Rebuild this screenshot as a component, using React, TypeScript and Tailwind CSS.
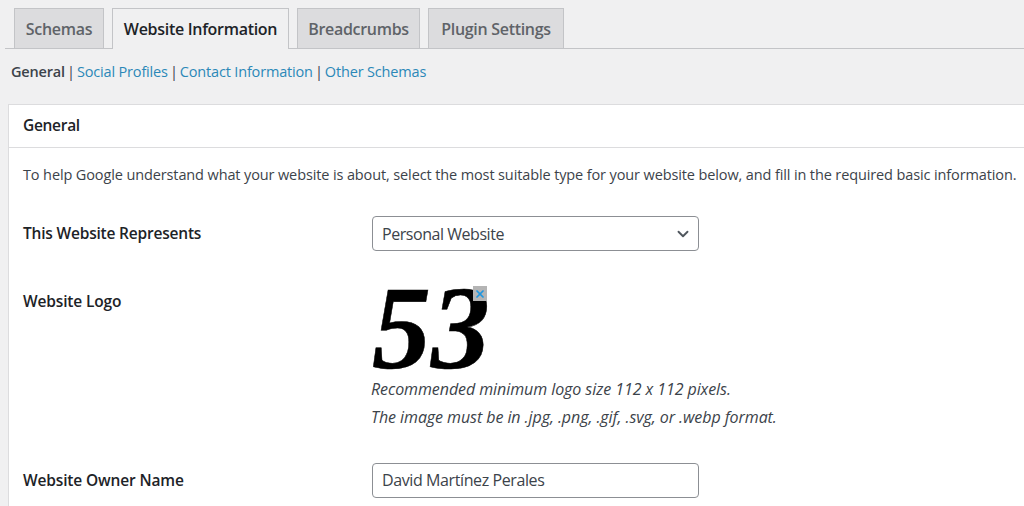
import { ChevronDown, X } from "lucide-react";

const tabs = ["Schemas", "Website Information", "Breadcrumbs", "Plugin Settings"];
const subLinks = ["Social Profiles", "Contact Information", "Other Schemas"];

const App = () => {
  return (
    <div className="h-[506px] w-[1024px] overflow-hidden bg-[#f0f0f1] font-['Open_Sans',sans-serif] text-[15px] text-[#3c434a]">
      {/* Tabs */}
      <div className="ml-[5px] flex h-[49px] items-end gap-[8px] border-b border-[#c3c4c7] pl-[9px] pt-[8px]">
        {tabs.map((tab) =>
          tab === "Website Information" ? (
            <div
              key={tab}
              className="-mb-px flex h-[41px] w-[177px] items-center justify-center border border-b-0 border-[#c3c4c7] bg-[#f0f0f1] text-[16px] font-semibold tracking-[-0.3px] text-[#1d2327]"
            >
              {tab}
            </div>
          ) : (
            <div
              key={tab}
              className={`flex h-[40px] items-center justify-center border border-b-0 border-[#c3c4c7] bg-[#dcdcde] text-[16px] font-semibold tracking-[-0.3px] text-[#5f6368] ${
                tab === "Schemas" ? "w-[90px]" : tab === "Breadcrumbs" ? "w-[123px]" : "w-[136px]"
              }`}
            >
              {tab}
            </div>
          )
        )}
      </div>

      {/* Sub navigation */}
      <div className="flex h-[47px] items-center pb-[1px] pl-[11px] text-[14.5px] tracking-[-0.17px]">
        <span className="font-semibold">General</span>
        {subLinks.map((link) => (
          <span key={link} className="flex items-center">
            <span className="w-[12px] text-center">|</span>
            <span className="text-[#2b88b8]">{link}</span>
          </span>
        ))}
      </div>

      {/* Card */}
      <div className="ml-[8px] mt-[8px] w-[1100px] border border-[#dcdcde] bg-white pb-[40px]">
        <div className="flex h-[43px] items-center border-b border-[#dcdcde] pl-[14px] text-[15.5px] font-semibold tracking-[-0.3px] text-[#1d2327]">
          General
        </div>
        <div className="pl-[14px] pt-[17px]">
          <p className="whitespace-nowrap text-[14.5px] leading-[20px] tracking-[-0.12px]">
            To help Google understand what your website is about, select the most suitable type for your website below, and fill in the required basic information.
          </p>

          <div className="mt-[31px] flex h-[35px] items-center">
            <div className="w-[349px] text-[15.5px] font-semibold tracking-[-0.2px] text-[#1d2327]">This Website Represents</div>
            <div className="flex h-[35px] w-[327px] items-center justify-between rounded-[4px] border border-[#8c8f94] bg-white pl-[9px] pr-[6px] text-[16px] tracking-[-0.45px] text-[#3c434a]">
              Personal Website
              <ChevronDown size={18} strokeWidth={2.5} className="text-[#50575e]" />
            </div>
          </div>

          <div className="mt-[33px] flex h-[153px]">
            <div className="w-[348px] pt-[6px] text-[15.5px] font-semibold tracking-[-0.15px] text-[#1d2327]">Website Logo</div>
            <div>
              <div className="relative ml-[1px] h-[90px] w-[116px]">
                <span className="block h-[90px] font-['Liberation_Serif',serif] text-[118px] font-bold italic leading-[90px] text-black [-webkit-text-stroke:0.5px_black]">53</span>
                <div className="absolute left-[101px] top-[2px] flex h-[15px] w-[14px] items-center justify-center bg-[#b4b4b4]">
                  <X size={12} strokeWidth={3.5} className="text-[#1e96e0]" />
                </div>
              </div>
              <p className="mt-[1px] whitespace-nowrap text-[16px] italic leading-[28px] tracking-[-0.07px]">Recommended minimum logo size 112 x 112 pixels.</p>
              <p className="whitespace-nowrap text-[16px] italic leading-[28px] tracking-[-0.07px]">The image must be in .jpg, .png, .gif, .svg, or .webp format.</p>
            </div>
          </div>

          <div className="mt-[26px] flex h-[35px] items-center">
            <div className="w-[349px] text-[15.5px] font-semibold tracking-[-0.15px] text-[#1d2327]">Website Owner Name</div>
            <div className="flex h-[35px] w-[327px] items-center rounded-[4px] border border-[#8c8f94] bg-white pb-[1px] pl-[9px] text-[16px] tracking-[-0.4px] text-[#3c434a]">
              David Martínez Perales
            </div>
          </div>
        </div>
      </div>
    </div>
  );
};

export default App;
